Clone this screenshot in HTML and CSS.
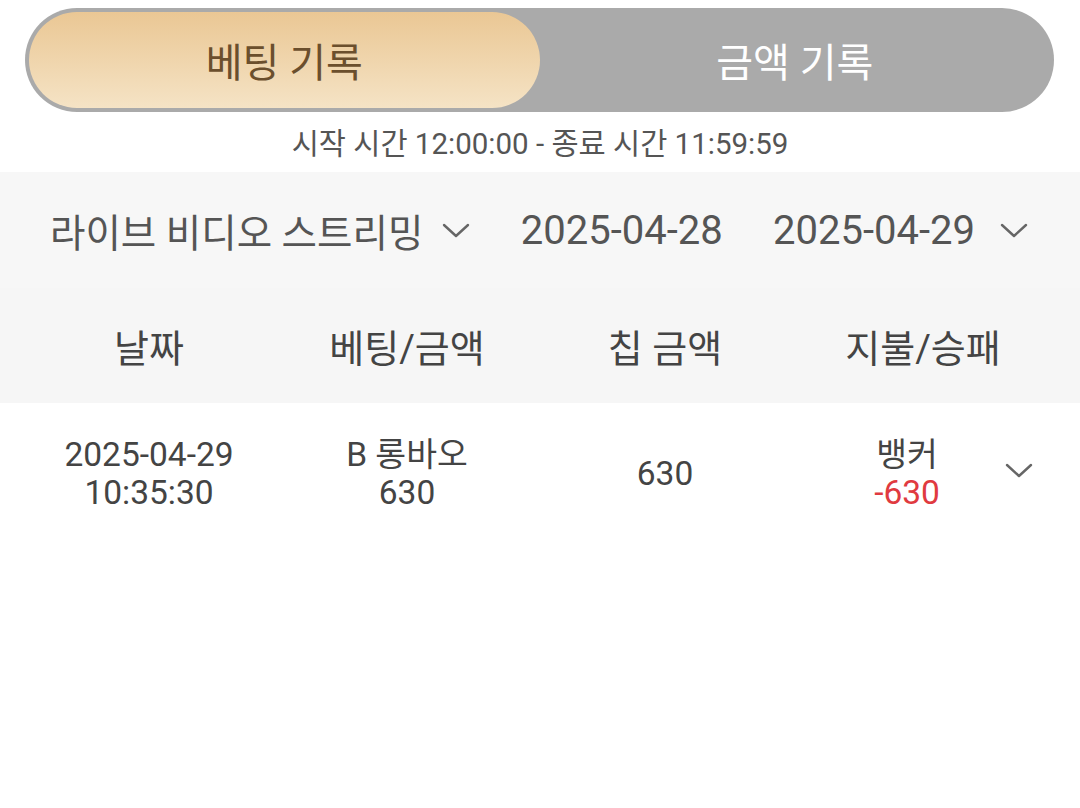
FILE: index.html
```html
<!DOCTYPE html>
<html lang="ko">
<head>
<meta charset="utf-8">
<title>베팅 기록</title>
<link rel="stylesheet" href="styles.css">
</head>
<body>
<div class="tabs">
  <div class="tab tab-active">베팅 기록</div>
  <div class="tab">금액 기록</div>
</div>
<div class="period">시작 시간 12:00:00 - 종료 시간 11:59:59</div>
<div class="filters">
  <div class="filter"><span class="ko">라이브 비디오 스트리밍</span><svg class="chev" viewBox="0 0 28 15" width="28" height="15"><polyline points="2,2 14,13 26,2"/></svg></div>
  <div class="filter">2025-04-28</div>
  <div class="filter">2025-04-29<svg class="chev chev-date" viewBox="0 0 28 15" width="28" height="15"><polyline points="2,2 14,13 26,2"/></svg></div>
</div>
<div class="thead">
  <div class="th">날짜</div>
  <div class="th">베팅/금액</div>
  <div class="th">칩 금액</div>
  <div class="th">지불/승패</div>
</div>
<div class="trow">
  <div class="td"><div class="line">2025-04-29</div><div class="line">10:35:30</div></div>
  <div class="td"><div class="line">B 롱바오</div><div class="line">630</div></div>
  <div class="td"><div class="line">630</div></div>
  <div class="td td-last">
    <div class="res"><div class="line">뱅커</div><div class="line neg">-630</div></div>
    <svg class="chev" viewBox="0 0 28 15" width="28" height="15"><polyline points="2,2 14,13 26,2"/></svg>
  </div>
</div>
</body>
</html>
```
FILE: styles.css
```css
html, body {
  margin: 0;
  padding: 0;
  background: #ffffff;
  font-family: "Roboto", "Noto Sans CJK KR", sans-serif;
  color: #4a4a4a;
}
.tabs {
  display: flex;
  margin: 8px 26px 0 25px;
  height: 104px;
  box-sizing: border-box;
  padding: 4px;
  border-radius: 52px;
  background: #aaaaaa;
}
.tab {
  flex: 1;
  display: flex;
  align-items: center;
  justify-content: center;
  border-radius: 48px;
  font-size: 40px;
  font-weight: 400;
  color: #ffffff;
}
.tab-active {
  background: linear-gradient(180deg, #eac794 0%, #f5e3c5 100%);
  color: #6b4f2d;
}
.period {
  height: 60px;
  box-sizing: border-box;
  padding-top: 4px;
  line-height: 56px;
  text-align: center;
  font-size: 29.5px;
  color: #555555;
}
.filters {
  display: flex;
  justify-content: space-between;
  align-items: center;
  height: 116px;
  padding: 0 52px 0 50px;
  background: #f7f7f7;
  font-size: 40px;
  color: #555555;
}
.filter {
  display: flex;
  align-items: center;
}
.ko {
  font-size: 38.5px;
}
.chev {
  flex: none;
  margin-left: 19px;
}
.chev-date {
  margin-left: 25px;
}
.chev polyline {
  fill: none;
  stroke: #666666;
  stroke-width: 2.4;
  stroke-linecap: round;
  stroke-linejoin: round;
}
.thead {
  display: grid;
  grid-template-columns: repeat(4, 258px);
  align-items: center;
  height: 115px;
  padding-left: 20px;
  background: #f6f6f6;
  font-size: 38px;
  color: #444444;
}
.th {
  text-align: center;
}
.trow {
  display: grid;
  grid-template-columns: repeat(4, 258px);
  align-items: center;
  padding: 33px 0 30px 20px;
  font-size: 33.5px;
  line-height: 38px;
  color: #444444;
}
.td {
  text-align: center;
}
.td-last {
  display: flex;
  align-items: center;
}
.res {
  width: 196px;
  margin-left: 15px;
  text-align: center;
}
.td-last .chev {
  margin-left: 0;
  margin-top: -8px;
}
.neg {
  color: #e03a40;
}
```
